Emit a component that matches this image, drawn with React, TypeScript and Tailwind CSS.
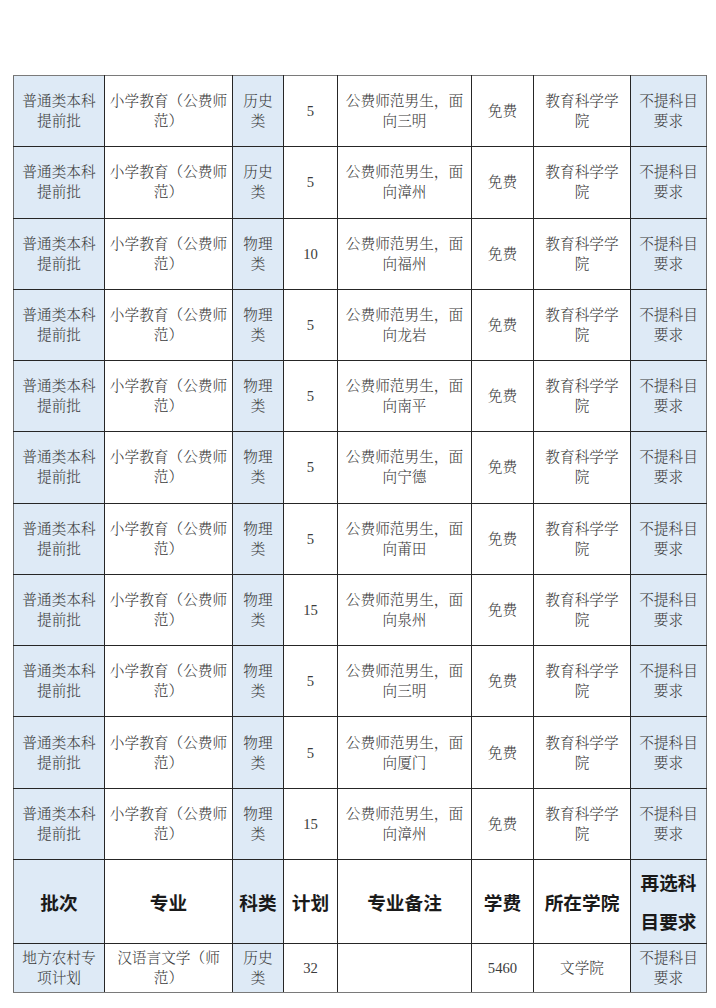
import React from "react";

const rows: [string, string, string][] = [
  ["历史类", "5", "三明"],
  ["历史类", "5", "漳州"],
  ["物理类", "10", "福州"],
  ["物理类", "5", "龙岩"],
  ["物理类", "5", "南平"],
  ["物理类", "5", "宁德"],
  ["物理类", "5", "莆田"],
  ["物理类", "15", "泉州"],
  ["物理类", "5", "三明"],
  ["物理类", "5", "厦门"],
  ["物理类", "15", "漳州"],
];

const body =
  "[font-family:'Liberation_Serif','Noto_Serif_CJK_SC','Noto_Sans_CJK_SC',serif] text-[14.67px] leading-[20px] text-[#3c3c3c] font-light";
const head =
  "[font-family:'Noto_Sans_CJK_SC','Noto_Sans',sans-serif] text-[18.67px] leading-[39px] font-bold text-[#1a1a1a]";

const cell = "border border-[#262626] text-center align-middle p-0";
const blue = "bg-[#deeaf6]";

export default function App() {
  return (
    <div className="w-[716px] h-[1008px] bg-white overflow-hidden pt-[75px] pl-[13px]">
      <table className="border-collapse table-fixed w-[693px]">
        <colgroup>
          <col className="w-[91px]" />
          <col className="w-[128px]" />
          <col className="w-[51px]" />
          <col className="w-[54px]" />
          <col className="w-[134px]" />
          <col className="w-[62px]" />
          <col className="w-[97px]" />
          <col className="w-[76px]" />
        </colgroup>
        <tbody className={body}>
          {rows.map((r, i) => (
            <tr key={i} className="h-[71.27px]">
              <td className={`${cell} ${blue} px-[5px] border-l-[#6e6e6e] ${i === 0 ? "border-t-[#7a7a7a]" : ""}`}>
                普通类本科提前批
              </td>
              <td className={`${cell} px-[4px] ${i === 0 ? "border-t-[#7a7a7a]" : ""}`}>小学教育（公费师范）</td>
              <td className={`${cell} ${blue} px-[6px] ${i === 0 ? "border-t-[#7a7a7a]" : ""}`}>{r[0]}</td>
              <td className={`${cell} ${i === 0 ? "border-t-[#7a7a7a]" : ""}`}>{r[1]}</td>
              <td className={`${cell} px-[6px] ${i === 0 ? "border-t-[#7a7a7a]" : ""}`}>
                公费师范男生，面向{r[2]}
              </td>
              <td className={`${cell} ${i === 0 ? "border-t-[#7a7a7a]" : ""}`}>免费</td>
              <td className={`${cell} px-[7px] ${i === 0 ? "border-t-[#7a7a7a]" : ""}`}>教育科学学院</td>
              <td className={`${cell} ${blue} px-[4px] border-r-[#6e6e6e] ${i === 0 ? "border-t-[#7a7a7a]" : ""}`}>
                不提科目要求
              </td>
            </tr>
          ))}
          <tr className={`h-[84px] ${head}`}>
            <td className={`${cell} ${blue} px-[5px] border-l-[#6e6e6e]`}>批次</td>
            <td className={`${cell} px-[4px]`}>专业</td>
            <td className={`${cell} ${blue} px-[2px]`}>科类</td>
            <td className={`${cell} px-[2px]`}>计划</td>
            <td className={`${cell} px-[6px]`}>专业备注</td>
            <td className={`${cell} px-[2px]`}>学费</td>
            <td className={`${cell} px-[4px]`}>所在学院</td>
            <td className={`${cell} ${blue} px-[6px] border-r-[#6e6e6e]`}>再选科目要求</td>
          </tr>
          <tr className="h-[49px]">
            <td className={`${cell} ${blue} px-[5px] border-l-[#6e6e6e] border-b-[#7a7a7a]`}>地方农村专项计划</td>
            <td className={`${cell} px-[4px] border-b-[#7a7a7a]`}>汉语言文学（师范）</td>
            <td className={`${cell} ${blue} px-[6px] border-b-[#7a7a7a]`}>历史类</td>
            <td className={`${cell} border-b-[#7a7a7a]`}>32</td>
            <td className={`${cell} px-[6px] border-b-[#7a7a7a]`}></td>
            <td className={`${cell} border-b-[#7a7a7a]`}>5460</td>
            <td className={`${cell} px-[7px] border-b-[#7a7a7a]`}>文学院</td>
            <td className={`${cell} ${blue} px-[4px] border-r-[#6e6e6e] border-b-[#7a7a7a]`}>不提科目要求</td>
          </tr>
        </tbody>
      </table>
    </div>
  );
}
